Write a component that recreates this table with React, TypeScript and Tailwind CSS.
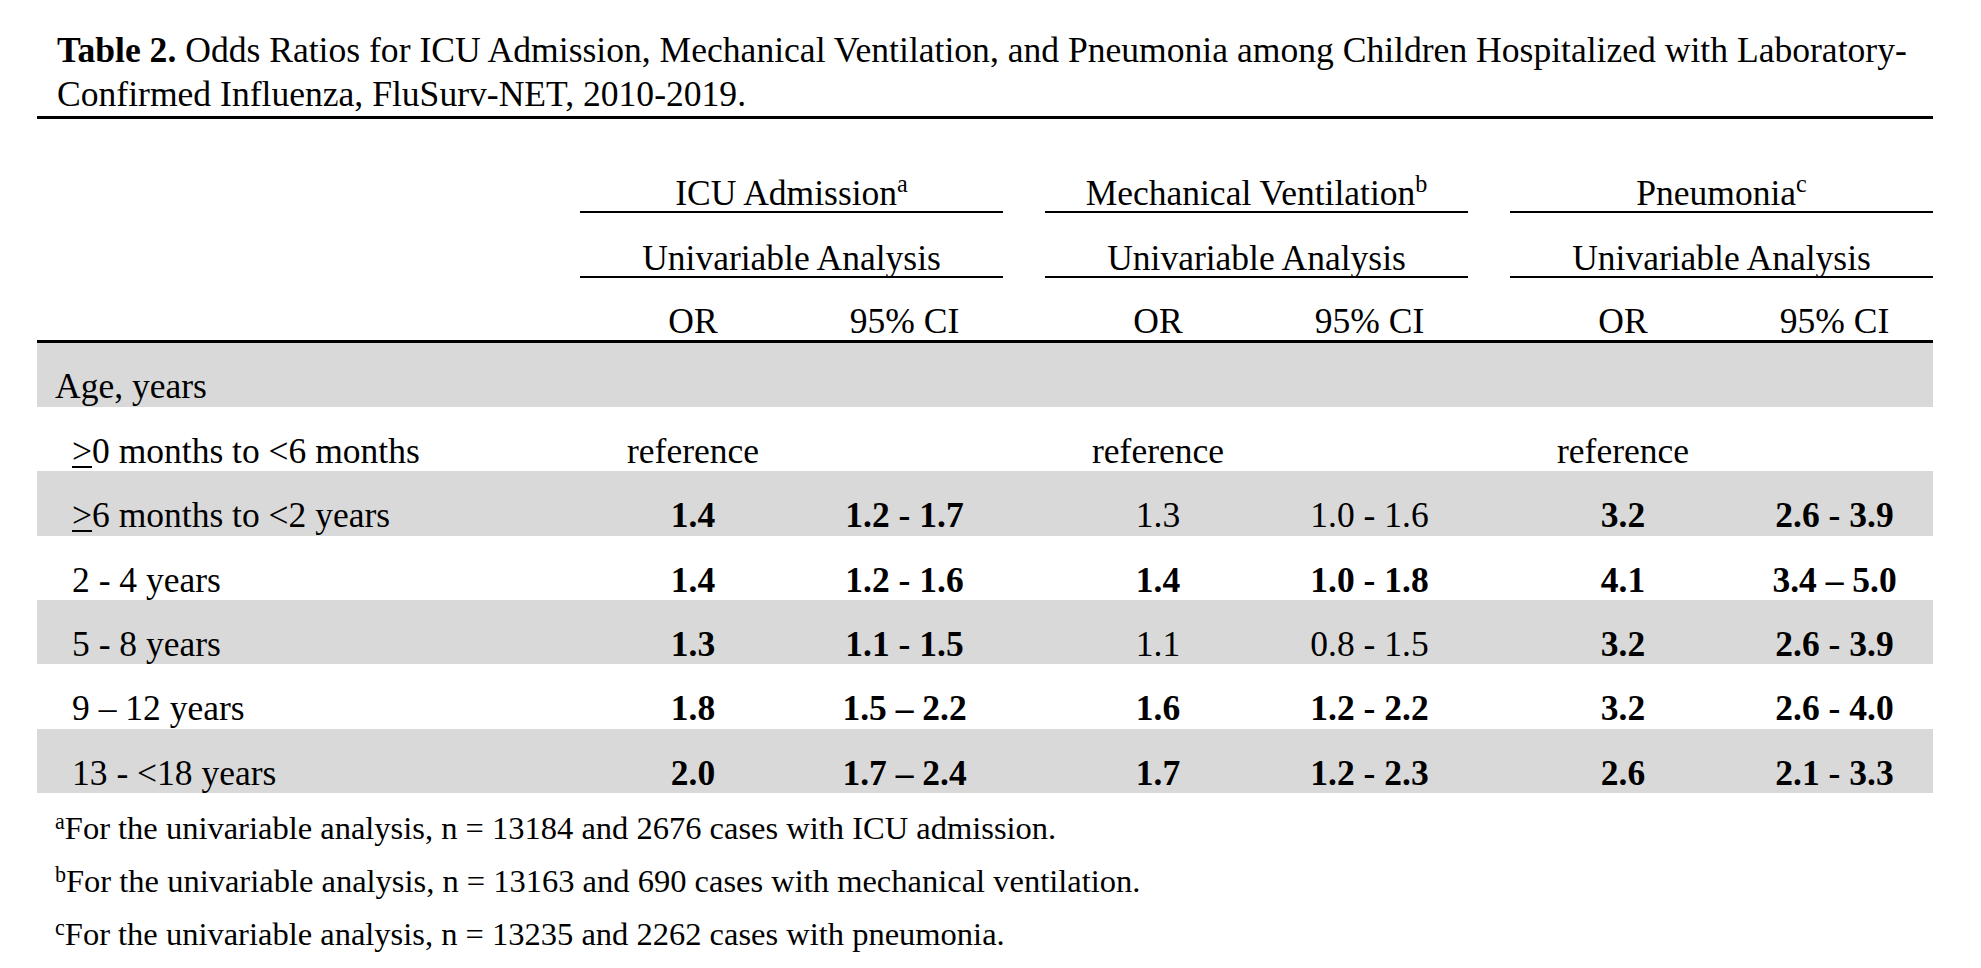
import React from "react";

type Cell = [string, boolean];

type Row = {
  label: string;
  ge?: boolean;
  head?: boolean;
  reference?: boolean;
  values?: Cell[];
};

const rows: Row[] = [
  { label: "Age, years", head: true },
  { label: "0 months to <6 months", ge: true, reference: true },
  {
    label: "6 months to <2 years",
    ge: true,
    values: [
      ["1.4", true],
      ["1.2 - 1.7", true],
      ["1.3", false],
      ["1.0 - 1.6", false],
      ["3.2", true],
      ["2.6 - 3.9", true],
    ],
  },
  {
    label: "2 - 4 years",
    values: [
      ["1.4", true],
      ["1.2 - 1.6", true],
      ["1.4", true],
      ["1.0 - 1.8", true],
      ["4.1", true],
      ["3.4 – 5.0", true],
    ],
  },
  {
    label: "5 - 8 years",
    values: [
      ["1.3", true],
      ["1.1 - 1.5", true],
      ["1.1", false],
      ["0.8 - 1.5", false],
      ["3.2", true],
      ["2.6 - 3.9", true],
    ],
  },
  {
    label: "9 – 12 years",
    values: [
      ["1.8", true],
      ["1.5 – 2.2", true],
      ["1.6", true],
      ["1.2 - 2.2", true],
      ["3.2", true],
      ["2.6 - 4.0", true],
    ],
  },
  {
    label: "13 - <18 years",
    values: [
      ["2.0", true],
      ["1.7 – 2.4", true],
      ["1.7", true],
      ["1.2 - 2.3", true],
      ["2.6", true],
      ["2.1 - 3.3", true],
    ],
  },
];

const groups = [
  { title: "ICU Admission", mark: "a" },
  { title: "Mechanical Ventilation", mark: "b" },
  { title: "Pneumonia", mark: "c" },
];

const notes = [
  { mark: "a", text: "For the univariable analysis, n = 13184 and 2676 cases with ICU admission." },
  { mark: "b", text: "For the univariable analysis, n = 13163 and 690 cases with mechanical ventilation." },
  { mark: "c", text: "For the univariable analysis, n = 13235 and 2262 cases with pneumonia." },
];

const grid = "grid grid-cols-[543px_226px_197px_42px_226px_197px_42px_226px_197px]";

export default function App() {
  return (
    <div className="w-[1981px] min-h-[968px] bg-white text-black font-['Liberation_Serif','Times_New_Roman',serif]">
      <div className="ml-[37px] w-[1896px]">
        {/* Title */}
        <div className="pl-[20px] pt-[28px] text-[35.6px] leading-[44px] border-b-[3px] border-black">
          <div className="whitespace-nowrap">
            <span className="font-bold">Table 2.</span> Odds Ratios for ICU Admission, Mechanical
            Ventilation, and Pneumonia among Children Hospitalized with Laboratory-
          </div>
          <div className="whitespace-nowrap">Confirmed Influenza, FluSurv-NET, 2010-2019.</div>
        </div>

        {/* Header rows */}
        <div className="text-[35.5px]">
          <div className={`${grid} h-[94px]`}>
            <div />
            {groups.map((g, i) => (
              <React.Fragment key={g.title}>
                {i > 0 && <div />}
                <div className="col-span-2 flex items-end justify-center border-b-2 border-black">
                  <span className="leading-none whitespace-nowrap">
                    {g.title}
                    <sup className="text-[0.68em] top-[-0.5em]">{g.mark}</sup>
                  </span>
                </div>
              </React.Fragment>
            ))}
          </div>
          <div className={`${grid} h-[65px]`}>
            <div />
            {groups.map((g, i) => (
              <React.Fragment key={g.title}>
                {i > 0 && <div />}
                <div className="col-span-2 flex items-end justify-center border-b-2 border-black">
                  <span className="leading-none whitespace-nowrap">Univariable Analysis</span>
                </div>
              </React.Fragment>
            ))}
          </div>
          <div className={`${grid} h-[64.5px] border-b-[3px] border-black`}>
            <div />
            {groups.map((g, i) => (
              <React.Fragment key={g.title}>
                {i > 0 && <div />}
                <div className="flex items-end justify-center">
                  <span className="leading-none">OR</span>
                </div>
                <div className="flex items-end justify-center">
                  <span className="leading-none">95% CI</span>
                </div>
              </React.Fragment>
            ))}
          </div>
        </div>

        {/* Body rows */}
        <div className="text-[35.5px]">
          {rows.map((row, r) => (
            <div
              key={row.label}
              className={`${grid} h-[64.4px] ${r % 2 === 0 ? "bg-[#d9d9d9]" : ""}`}
            >
              <div className={`flex items-end pb-[2px] ${row.head ? "pl-[18px]" : "pl-[35px]"}`}>
                <span className="leading-none whitespace-nowrap">
                  {row.ge && <span className="underline decoration-[1.5px] underline-offset-[3px]">&gt;</span>}
                  {row.label}
                </span>
              </div>
              {!row.head &&
                groups.map((g, i) => (
                  <React.Fragment key={g.title}>
                    {i > 0 && <div />}
                    {row.reference ? (
                      <>
                        <div className="flex items-end justify-center pb-[2px]">
                          <span className="leading-none">reference</span>
                        </div>
                        <div />
                      </>
                    ) : (
                      row.values!.slice(i * 2, i * 2 + 2).map(([v, b], k) => (
                        <div key={k} className="flex items-end justify-center pb-[2px]">
                          <span className={`leading-none whitespace-nowrap ${b ? "font-bold" : ""}`}>{v}</span>
                        </div>
                      ))
                    )}
                  </React.Fragment>
                ))}
            </div>
          ))}
        </div>

        {/* Footnotes */}
        <div className="pl-[18px] pt-[9px] text-[32.5px] leading-[53px]">
          {notes.map((n) => (
            <div key={n.mark} className="whitespace-nowrap">
              <sup className="text-[0.68em] top-[-0.45em]">{n.mark}</sup>
              {n.text}
            </div>
          ))}
        </div>
      </div>
    </div>
  );
}
